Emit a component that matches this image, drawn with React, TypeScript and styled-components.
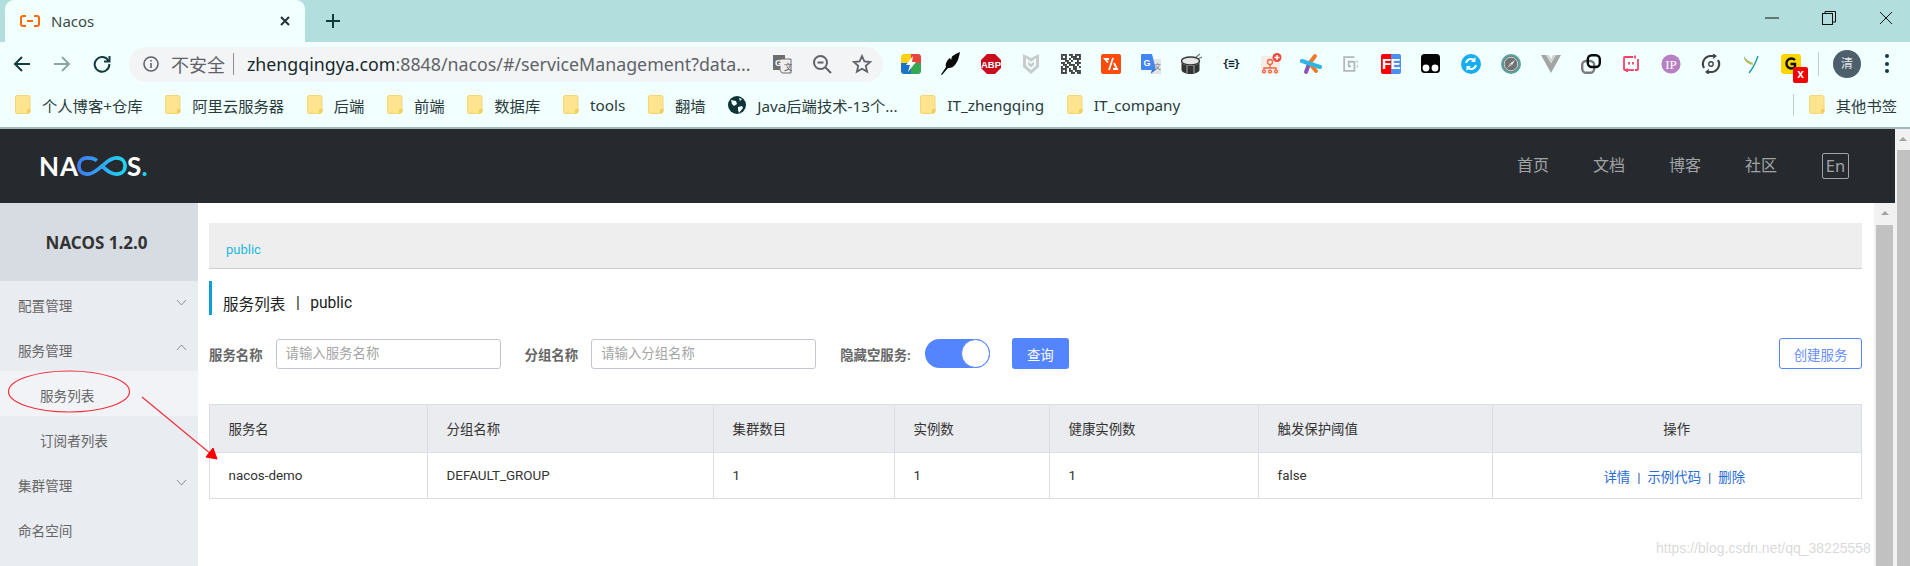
import React from "react";
import styled, { createGlobalStyle } from "styled-components";

const SANS = '"Noto Sans", "Noto Sans CJK SC", sans-serif';
const PAGE_SANS = 'Roboto, "Noto Sans CJK SC", sans-serif';

const GlobalStyle = createGlobalStyle`
  html, body { margin: 0; padding: 0; background: #fff; overflow: hidden; }
  body { font-family: ${SANS}; }
  * { box-sizing: border-box; }
`;

export default function App() {
  return (
    <Page>
      <GlobalStyle />
      <TabStrip>
        <Tab>
          <svg width="20" height="12" viewBox="0 0 20 12">
            <path d="M6 1H3Q1 1 1 3V9Q1 11 3 11H6M14 1H17Q19 1 19 3V9Q19 11 17 11H14M7 6H13" fill="none" stroke="#ff6a00" strokeWidth="2" />
          </svg>
          <TabTitle>Nacos</TabTitle>
          <svg width="12" height="12" viewBox="0 0 12 12">
            <path d="M2 2L10 10M10 2L2 10" stroke="#263238" strokeWidth="2" />
          </svg>
        </Tab>
        <NewTab>
          <svg width="16" height="16" viewBox="0 0 16 16">
            <path d="M8 1V15M1 8H15" stroke="#0f3b3d" strokeWidth="2" />
          </svg>
        </NewTab>
        <WindowButtons>
          <svg width="14" height="14" viewBox="0 0 14 14"><path d="M0 7H14" stroke="#111" /></svg>
          <svg width="14" height="14" viewBox="0 0 14 14" fill="none" stroke="#111">
            <rect x="0.5" y="2.5" width="10" height="11" /><path d="M3 2.5V.5H13.5V11H10.5" />
          </svg>
          <svg width="14" height="14" viewBox="0 0 14 14"><path d="M1 1L13 13M13 1L1 13" stroke="#111" /></svg>
        </WindowButtons>
      </TabStrip>

      <Toolbar>
        <ToolButton>
          <svg width="18" height="18" viewBox="0 0 18 18" fill="none" stroke="#143c3e" strokeWidth="2">
            <path d="M17 9H2M9 2L2 9L9 16" />
          </svg>
        </ToolButton>
        <ToolButton>
          <svg width="18" height="18" viewBox="0 0 18 18" fill="none" stroke="#8fa3a3" strokeWidth="2">
            <path d="M1 9H16M9 2L16 9L9 16" />
          </svg>
        </ToolButton>
        <ToolButton>
          <svg width="18" height="18" viewBox="0 0 18 18" fill="none" stroke="#143c3e" strokeWidth="2">
            <path d="M15.5 6A7.3 7.3 0 1 0 16.3 9" /><path d="M16.5 1V6.5H11" />
          </svg>
        </ToolButton>
        <UrlPill>
          <svg width="16" height="16" viewBox="0 0 16 16" fill="none" stroke="#5f6368" strokeWidth="1.6">
            <circle cx="8" cy="8" r="7" /><path d="M8 7V12M8 4V5.6" />
          </svg>
          <NotSecure>不安全</NotSecure>
          <UrlDivider />
          <UrlText><b>zhengqingya.com</b>:8848/nacos/#/serviceManagement?data...</UrlText>
          <UrlActions>
            <svg width="20" height="20" viewBox="0 0 20 20">
              <rect x="1" y="1" width="12" height="15" fill="#6e6e6e" />
              <path d="M8 5H19V19H10L8 16Z" fill="#eee" stroke="#6e6e6e" />
              <text x="3" y="12" fontSize="9" fontWeight="700" fill="#fff" fontFamily="Liberation Sans, sans-serif">G</text>
              <text x="12" y="16" fontSize="9" fill="#555" fontFamily="Liberation Sans, sans-serif">文</text>
            </svg>
            <svg width="20" height="20" viewBox="0 0 20 20" fill="none" stroke="#5f6368" strokeWidth="2">
              <circle cx="8.5" cy="8.5" r="6.5" /><path d="M13.5 13.5L19 19M5.5 8.5H11.5" />
            </svg>
            <svg width="20" height="20" viewBox="0 0 20 20" fill="none" stroke="#5f6368" strokeWidth="1.8">
              <path d="M10 2L12.4 7.4L18.2 8L13.8 11.9L15.1 17.6L10 14.7L4.9 17.6L6.2 11.9L1.8 8L7.6 7.4Z" />
            </svg>
          </UrlActions>
        </UrlPill>
        <Extensions>
          {extensions.map((icon, i) => (
            <ExtCell key={i}>{icon}</ExtCell>
          ))}
        </Extensions>
        <ToolDivider />
        <Avatar>清</Avatar>
        <MenuDots>
          <i /><i /><i />
        </MenuDots>
      </Toolbar>

      <Bookmarks>
        {bookmarks.map((b) => (
          <Bookmark key={b}>
            {b.startsWith("Java") ? <GlobeIcon /> : <FolderIcon />}
            <span>{b}</span>
          </Bookmark>
        ))}
        <OtherBookmarks>
          <FolderIcon />
          <span>其他书签</span>
        </OtherBookmarks>
      </Bookmarks>

      <Viewport>
        <Main>
          <NavBar>
            <Logo>
              <span>N</span>
              <span>A</span>
              <svg width="50" height="20" viewBox="0 0 50 20" fill="none">
                <defs>
                  <linearGradient id="inf" x1="0" x2="1" y1="0" y2="0">
                    <stop offset="0" stopColor="#3f7cf6" />
                    <stop offset="1" stopColor="#1fd6f2" />
                  </linearGradient>
                </defs>
                <path
                  d="M20 4.5C17 2.5 14 1.9 10.5 1.9C5 1.9 1.9 5.5 1.9 10C1.9 14.5 5 18.1 10.5 18.1C16.5 18.1 20 14 25 10C30 6 33.5 1.9 39.5 1.9C45 1.9 48.1 5.5 48.1 10C48.1 14.5 45 18.1 39.5 18.1C33.5 18.1 29.5 14 25 10"
                  stroke="url(#inf)"
                  strokeWidth="3.7"
                />
              </svg>
              <span>S</span>
              <LogoDot>.</LogoDot>
            </Logo>
            <NavLinks>
              <NavLink>首页</NavLink>
              <NavLink>文档</NavLink>
              <NavLink>博客</NavLink>
              <NavLink>社区</NavLink>
              <LangButton>En</LangButton>
            </NavLinks>
          </NavBar>
          <Body>
            <Sidebar>
              <SideHead>NACOS 1.2.0</SideHead>
              <MenuItem>配置管理<Chevron /></MenuItem>
              <MenuItem>服务管理<Chevron $up /></MenuItem>
              <MenuItem $sub $active>服务列表</MenuItem>
              <MenuItem $sub>订阅者列表</MenuItem>
              <MenuItem>集群管理<Chevron /></MenuItem>
              <MenuItem>命名空间</MenuItem>
            </Sidebar>
            <Content>
              <PublicBar>public</PublicBar>
              <PageTitle>
                服务列表<TitleSep>|</TitleSep>public
              </PageTitle>
              <FilterRow>
                <FieldLabel>服务名称</FieldLabel>
                <TextInput placeholder="请输入服务名称" />
                <FieldLabel $left={24}>分组名称</FieldLabel>
                <TextInput placeholder="请输入分组名称" />
                <FieldLabel $left={24}>隐藏空服务:</FieldLabel>
                <Toggle><Knob /></Toggle>
                <PrimaryButton>查询</PrimaryButton>
                <OutlineButton>创建服务</OutlineButton>
              </FilterRow>
              <Table>
                <colgroup>
                  {colWidths.map((w) => (
                    <Col key={w} $w={w} />
                  ))}
                </colgroup>
                <thead>
                  <tr>
                    <Th>服务名</Th>
                    <Th>分组名称</Th>
                    <Th>集群数目</Th>
                    <Th>实例数</Th>
                    <Th>健康实例数</Th>
                    <Th>触发保护阈值</Th>
                    <Th $center>操作</Th>
                  </tr>
                </thead>
                <tbody>
                  <tr>
                    <Td>nacos-demo</Td>
                    <Td>DEFAULT_GROUP</Td>
                    <Td>1</Td>
                    <Td>1</Td>
                    <Td>1</Td>
                    <Td>false</Td>
                    <ActionCell>
                      <ActionLink>详情</ActionLink>
                      <ActionSep>|</ActionSep>
                      <ActionLink>示例代码</ActionLink>
                      <ActionSep>|</ActionSep>
                      <ActionLink>删除</ActionLink>
                    </ActionCell>
                  </tr>
                </tbody>
              </Table>
            </Content>
            <InnerScroll>
              <ScrollArrow />
              <ScrollThumb />
            </InnerScroll>
          </Body>
        </Main>
        <OuterScroll>
          <ScrollArrow />
          <ScrollThumb />
        </OuterScroll>
      </Viewport>

      {/* 截图上的红色标注 */}
      <Annotation width="1910" height="566" viewBox="0 0 1910 566" fill="none">
        <ellipse cx="69" cy="391.5" rx="60.5" ry="20.5" stroke="#f0303a" strokeWidth="1.2" />
        <path d="M142 397L211 454" stroke="#f0303a" strokeWidth="1.2" />
        <path d="M217 459L206 457L213 448Z" fill="#f00" stroke="#f00" />
      </Annotation>
      <Watermark>https://blog.csdn.net/qq_38225558</Watermark>
    </Page>
  );
}

const bookmarks = [
  "个人博客+仓库",
  "阿里云服务器",
  "后端",
  "前端",
  "数据库",
  "tools",
  "翻墙",
  "Java后端技术-13个...",
  "IT_zhengqing",
  "IT_company",
];

const colWidths = [218, 286, 181, 155, 209, 234, 369];

function FolderIcon() {
  return (
    <svg width="16" height="19" viewBox="0 0 16 19">
      <path d="M2 .5H13Q15 .5 15 2.5V16.5Q15 18.5 13 18.5H2Q.5 18.5 .5 17V2Q.5 .5 2 .5Z" fill="#ffe48f" stroke="#f3d676" />
      <path d="M12 18V15Q12 14 13.5 14H15.5V16Q15.5 18 13 18Z" fill="#f3cd5c" />
    </svg>
  );
}

function GlobeIcon() {
  return (
    <svg width="18" height="18" viewBox="0 0 18 18">
      <circle cx="9" cy="9" r="9" fill="#0f3336" />
      <path d="M3 4L8 5L9 8L6 10L4 8ZM10 11L14 10L15 12L11 17L10 14ZM11 2L14 3L12 5Z" fill="#f1ffff" />
    </svg>
  );
}

function Chevron({ $up }: { $up?: boolean }) {
  return (
    <ChevronSvg width="11" height="7" viewBox="0 0 11 7" fill="none" stroke="#8d9099">
      <path d={$up ? "M1 6L5.5 1L10 6" : "M1 1L5.5 6L10 1"} />
    </ChevronSvg>
  );
}

const Page = styled.div`
  position: relative;
  width: 1910px;
  height: 566px;
  overflow: hidden;
  display: flex;
  flex-direction: column;
  color: #263238;
  font-family: ${SANS};
`;

const TabStrip = styled.div`
  height: 42px;
  background: #b2dfdd;
  display: flex;
  padding-left: 5px;
`;

const Tab = styled.div`
  position: relative;
  width: 300px;
  background: #f1ffff;
  border-radius: 9px 9px 0 0;
  display: flex;
  align-items: center;
  padding: 0 14px 0 15px;
`;

const TabTitle = styled.span`
  flex: 1;
  margin-left: 11px;
  font-size: 15px;
  color: #3c4a4a;
`;

const NewTab = styled.div`
  width: 56px;
  display: flex;
  align-items: center;
  justify-content: center;
`;

const WindowButtons = styled.div`
  margin-left: auto;
  width: 128px;
  margin-right: 17px;
  display: flex;
  align-items: center;
  justify-content: space-between;
  padding-bottom: 6px;
`;

const Toolbar = styled.div`
  height: 43px;
  background: #f1ffff;
  display: flex;
  align-items: center;
  padding-left: 2px;
`;

const ToolButton = styled.div`
  width: 40px;
  display: flex;
  justify-content: center;
`;

const UrlPill = styled.div`
  width: 754px;
  height: 35px;
  margin-left: 7px;
  margin-top: 1px;
  border-radius: 18px;
  background: #f3f4f6;
  display: flex;
  align-items: center;
  padding-left: 14px;
`;

const NotSecure = styled.span`
  margin-left: 12px;
  font-size: 18px;
  color: #5f6368;
`;

const UrlDivider = styled.i`
  width: 1px;
  height: 22px;
  margin: 0 13px 0 8px;
  background: #8a8f93;
`;

const UrlText = styled.span`
  font-size: 17.8px;
  color: #5f6368;
  white-space: nowrap;
  width: 506px;
  b {
    font-weight: 400;
    color: #16292b;
  }
`;

const UrlActions = styled.div`
  display: flex;
  gap: 20px;
  margin-left: 19px;
`;

const Extensions = styled.div`
  display: flex;
  margin-left: 8px;
`;

const ExtCell = styled.div`
  width: 40px;
  height: 26px;
  display: flex;
  align-items: center;
  justify-content: center;
`;

const BraceIcon = styled.span`
  font-family: "DejaVu Sans Mono", monospace;
  font-size: 11px;
  font-weight: 700;
  color: #123;
  letter-spacing: -1px;
`;

const FeIcon = styled.span`
  width: 20px;
  height: 20px;
  border-radius: 2px;
  background: linear-gradient(90deg, #f00 0 50%, #4a90f0 50% 100%);
  color: #fff;
  font-family: "Liberation Sans", sans-serif;
  font-weight: 700;
  font-size: 15px;
  line-height: 20px;
  text-align: center;
  letter-spacing: -0.5px;
`;

const GrammarIcon = styled.div`
  position: relative;
  width: 20px;
  height: 20px;
  border-radius: 3px;
  background: #fdd600;
`;

const GrammarBadge = styled.span`
  position: absolute;
  right: -7px;
  bottom: -9px;
  width: 15px;
  height: 16px;
  background: #f40000;
  border-radius: 2px;
  color: #fff;
  font-family: "Liberation Sans", sans-serif;
  font-size: 12px;
  font-weight: 700;
  line-height: 15px;
  text-align: center;
`;

const ToolDivider = styled.i`
  width: 1px;
  height: 24px;
  margin-left: 7px;
  background: #c2cccc;
`;

const Avatar = styled.div`
  width: 28px;
  height: 28px;
  margin-left: 14px;
  border-radius: 50%;
  background: #4c5f6b;
  color: #e4e9ec;
  font-size: 12px;
  line-height: 28px;
  text-align: center;
`;

const MenuDots = styled.div`
  margin-left: 24px;
  display: flex;
  flex-direction: column;
  gap: 3.5px;
  i {
    width: 4px;
    height: 4px;
    border-radius: 50%;
    background: #143c3e;
  }
`;

const Bookmarks = styled.div`
  height: 44px;
  background: #f1ffff;
  border-bottom: 2px solid #a3b9b9;
  display: flex;
  align-items: center;
  gap: 22.7px;
  padding: 0 13px 3px 15px;
`;

const Bookmark = styled.div`
  display: flex;
  align-items: center;
  gap: 11px;
  font-size: 15.3px;
  color: #2b3b3c;
  white-space: nowrap;
`;

const OtherBookmarks = styled(Bookmark)`
  margin-left: auto;
  padding-left: 15px;
  border-left: 1px solid #c2cccc;
  height: 22px;
`;

const Viewport = styled.div`
  flex: 1;
  min-height: 0;
  display: flex;
`;

const Main = styled.div`
  flex: 1;
  display: flex;
  flex-direction: column;
`;

const NavBar = styled.div`
  height: 74px;
  background: #262a2e;
  display: flex;
  align-items: center;
  justify-content: space-between;
  padding: 0 46px 0 39px;
`;

const Logo = styled.div`
  display: flex;
  align-items: center;
  color: #fff;
  font-family: "Lato", sans-serif;
  font-size: 26px;
  font-weight: 700;
  line-height: 1;
  span:nth-child(2) {
    margin: 0 -1px 0 1px;
  }
`;

const LogoDot = styled.span`
  color: #1fd6f2;
`;

const NavLinks = styled.div`
  display: flex;
  align-items: center;
  gap: 44px;
`;

const NavLink = styled.span`
  font-size: 16px;
  line-height: 22px;
  margin-bottom: 2px;
  color: #a0a3a5;
`;

const LangButton = styled.span`
  width: 27px;
  height: 26px;
  margin-left: 1px;
  border: 1px solid #a0a3a5;
  border-radius: 2px;
  color: #a0a3a5;
  font-size: 16.5px;
  line-height: 24px;
  text-align: center;
`;

const Body = styled.div`
  flex: 1;
  min-height: 0;
  display: flex;
`;

const Sidebar = styled.div`
  width: 198px;
  background: #e9ecf1;
`;

const SideHead = styled.div`
  height: 78px;
  padding-right: 5px;
  background: #d7dce3;
  display: flex;
  align-items: center;
  justify-content: center;
  font-size: 17px;
  font-weight: 700;
  color: #333;
`;

const MenuItem = styled.div<{ $sub?: boolean; $active?: boolean }>`
  height: 45px;
  display: flex;
  align-items: center;
  justify-content: space-between;
  padding: 3px 11px 0 ${(p) => (p.$sub ? 40 : 18)}px;
  background: ${(p) => (p.$active ? "#f1f3f7" : "transparent")};
  font-size: 13.6px;
  color: #666;
`;

const ChevronSvg = styled.svg`
  margin-top: -5px;
`;

const Content = styled.div`
  flex: 1;
  min-width: 0;
  padding: 20px 12px 0 11px;
  background: #fff;
  font-family: ${PAGE_SANS};
`;

const PublicBar = styled.div`
  height: 46px;
  background: #eeeeee;
  border-bottom: 1px solid #ccc;
  padding: 18px 0 0 17px;
  font-size: 13px;
  line-height: 18px;
  color: #1fb8e0;
`;

const PageTitle = styled.div`
  height: 34px;
  margin-top: 12px;
  border-left: 3px solid #0f9ed4;
  padding: 9px 0 0 11px;
  display: flex;
  align-items: center;
  font-size: 15.6px;
  color: #222;
`;

const TitleSep = styled.span`
  margin: 0 10.5px;
`;

const FilterRow = styled.div`
  height: 31px;
  margin-top: 23px;
  display: flex;
  align-items: center;
`;

const FieldLabel = styled.label<{ $left?: number }>`
  margin-left: ${(p) => p.$left ?? 0}px;
  margin-right: 13px;
  font-size: 13.4px;
  font-weight: 700;
  color: #666;
  white-space: nowrap;
`;

const TextInput = styled.input`
  width: 225px;
  height: 30px;
  border: 1px solid #c4c6cf;
  border-radius: 3px;
  padding: 0 9px;
  font-family: ${PAGE_SANS};
  font-size: 13.4px;
  outline: none;
  &::placeholder {
    color: #a5a5a5;
  }
`;

const Toggle = styled.div`
  width: 65px;
  height: 29px;
  margin-left: 1px;
  border-radius: 15px;
  background: #5584ff;
  display: flex;
  justify-content: flex-end;
`;

const Knob = styled.div`
  width: 29px;
  height: 29px;
  border-radius: 50%;
  background: #fff;
  border: 1px solid #5584ff;
`;

const PrimaryButton = styled.button`
  width: 57px;
  height: 31px;
  margin-left: 22px;
  border: 0;
  border-radius: 3px;
  background: #5584ff;
  color: #fff;
  font-family: ${PAGE_SANS};
  font-size: 13.4px;
`;

const OutlineButton = styled.button`
  width: 83px;
  height: 31px;
  margin-left: auto;
  border: 1px solid #5584ff;
  border-radius: 3px;
  background: #fff;
  color: #6a90f5;
  font-family: ${PAGE_SANS};
  font-size: 13.4px;
`;

const Table = styled.table`
  width: 1652px;
  margin-top: 35px;
  border-collapse: collapse;
  table-layout: fixed;
  font-size: 13.4px;
  color: #333;
`;

const Col = styled.col<{ $w: number }>`
  width: ${(p) => p.$w}px;
`;

const Th = styled.th<{ $center?: boolean }>`
  height: 48px;
  padding: 0 19px 1px 18.5px;
  background: #ebecf0;
  border: 1px solid #dcdee3;
  font-weight: 400;
  text-align: ${(p) => (p.$center ? "center" : "left")};
`;

const Td = styled.td`
  height: 46px;
  padding: 0 19px 0 18.5px;
  border: 1px solid #dcdee3;
  text-align: left;
`;

const ActionCell = styled(Td)`
  padding-right: 24px;
  text-align: center;
`;

const ActionLink = styled.a`
  color: #2a6cd6;
`;

const ActionSep = styled.span`
  margin: 0 7px;
  color: #2a5a9c;
`;

const InnerScroll = styled.div`
  width: 21px;
  background: #f1f1f1;
  padding: 22px 2px 0;
  position: relative;
`;

const OuterScroll = styled.div`
  width: 16px;
  background: #f1f1f1;
  padding: 21px 0 0 2px;
  position: relative;
`;

const ScrollArrow = styled.i`
  position: absolute;
  top: 8px;
  left: 50%;
  margin-left: -4px;
  border: 4px solid transparent;
  border-top: 0;
  border-bottom: 4px solid #a3a3a3;
`;

const ScrollThumb = styled.div`
  height: 100%;
  background: #c1c1c1;
`;

const Annotation = styled.svg`
  position: absolute;
  left: 0;
  top: 0;
  pointer-events: none;
`;

const Watermark = styled.span`
  position: absolute;
  left: 1656px;
  top: 535px;
  font-family: "Liberation Sans", sans-serif;
  font-size: 14px;
  line-height: 26px;
  color: rgba(205, 205, 205, 0.75);
  white-space: nowrap;
`;

// 二维码图标的点阵
const qrRows = [
  "1110110111",
  "1010011101",
  "1110101111",
  "0011010010",
  "1101100111",
  "0110111010",
  "1011001101",
  "1110101100",
  "1010110111",
  "1110011011",
];

const extensions: React.ReactNode[] = [
  <svg key="store" width="20" height="20" viewBox="0 0 20 20">
    <path d="M3 0H10V9H0V3Q0 0 3 0Z" fill="#fcd116" />
    <path d="M10 0H17Q20 0 20 3V9H10Z" fill="#e8453c" />
    <path d="M0 9H10V20H3Q0 20 0 17Z" fill="#1a73c8" />
    <path d="M10 9H20V17Q20 20 17 20H10Z" fill="#34a853" />
    <path d="M12 2L5 11H9L7 18L15 8H11Z" fill="#fff" />
  </svg>,
  <svg key="feather" width="20" height="24" viewBox="0 0 20 24">
    <path d="M19 0C18 5 17 10 13 14C11 16 8 16 7 16L1 23L0 22.5L5 15C4 12 6 8 9 6L10 8L11 4.5C13 3 16 1 19 0Z" fill="#0a0a0a" />
  </svg>,
  <svg key="abp" width="20" height="20" viewBox="0 0 20 20">
    <path d="M6 0H14L20 6V14L14 20H6L0 14V6Z" fill="#c70d1e" />
    <text x="10" y="13.5" textAnchor="middle" fontSize="9.5" fontWeight="700" fill="#fff" fontFamily="Liberation Sans, sans-serif">ABP</text>
  </svg>,
  <svg key="shield" width="16" height="20" viewBox="0 0 16 20">
    <path d="M0 0L8 4L16 0V13L8 20L0 13Z" fill="#c9cccc" />
    <path d="M3 4L8 8L13 4V11.5L8 16L3 11.5Z" fill="#f1ffff" />
    <path d="M5 7.5L8 10L11 7.5V11L8 13.5L5 11Z" fill="#c9cccc" />
  </svg>,
  <svg key="qr" width="20" height="20" viewBox="0 0 20 20">
    {qrRows.map((row, y) =>
      row.split("").map((c, x) =>
        c === "1" ? <rect key={`${x}-${y}`} x={x * 2} y={y * 2} width="1.9" height="1.9" fill="#3a3a3a" /> : null
      )
    )}
  </svg>,
  <svg key="code" width="20" height="20" viewBox="0 0 20 20">
    <rect width="20" height="20" rx="2" fill="#fc4c0c" />
    <path d="M8 5H4L7 8.5M12 4L8 16M13 9L16 15H12" fill="none" stroke="#fff" strokeWidth="1.8" />
  </svg>,
  <svg key="gt" width="20" height="20" viewBox="0 0 20 20">
    <path d="M8 5H20V20H11Z" fill="#e4e4e4" />
    <path d="M1 0H11L15 16H1Q0 16 0 15V1Q0 0 1 0Z" fill="#4285f4" />
    <path d="M11 16L9.5 20L14.5 16Z" fill="#3367c8" />
    <text x="2.5" y="11.5" fontSize="9" fontWeight="700" fill="#fff" fontFamily="Liberation Sans, sans-serif">G</text>
    <text x="13" y="15" fontSize="7" fill="#777" fontFamily="Noto Sans CJK SC, sans-serif">文</text>
  </svg>,
  <svg key="drum" width="21" height="21" viewBox="0 0 21 21">
    <path d="M14 5L19 1M16 6L21 4" stroke="#777" strokeWidth="1.2" />
    <ellipse cx="9.5" cy="8" rx="9" ry="4" fill="#e6e6e6" stroke="#333" strokeWidth="1.4" />
    <path d="M.5 9V17C.5 19 5 21 9.5 21C14 21 18.5 19 18.5 17V9C18 11 14 13 9.5 13C5 13 1 11 .5 9Z" fill="#333" />
    <path d="M6 13V20M13 13V20" stroke="#aaa" />
  </svg>,
  <BraceIcon key="brace">{"{≡}"}</BraceIcon>,
  <svg key="org" width="21" height="21" viewBox="0 0 21 21">
    <rect x="0" y="3" width="19" height="18" rx="2" fill="#f5ece8" />
    <g fill="none" stroke="#f2643c" strokeWidth="1.3">
      <circle cx="9" cy="9" r="2.5" />
      <path d="M9 11.5V15M3 17V15H15V17" />
      <circle cx="3" cy="18.5" r="1.4" /><circle cx="9" cy="18.5" r="1.4" /><circle cx="15" cy="18.5" r="1.4" />
    </g>
    <circle cx="16" cy="4.5" r="4.5" fill="#ea4a3c" />
    <path d="M16 2V7M13.5 4.5H18.5" stroke="#fff" strokeWidth="1.4" />
  </svg>,
  <svg key="star" width="22" height="22" viewBox="0 0 22 22" fill="none" strokeWidth="4" strokeLinecap="round">
    <path d="M15 3L9 11" stroke="#f07a28" />
    <path d="M9 11L6 19" stroke="#8e54b4" />
    <path d="M11 12L16 18" stroke="#f07a28" />
    <path d="M2 8L20 14" stroke="#2fb6e8" />
  </svg>,
  <svg key="spiral" width="16" height="16" viewBox="0 0 14 14" fill="none" stroke="#b4b8b8" strokeWidth="1.6">
    <path d="M10 1H1V13H10V5H5V9H7" /><path d="M12.5 4V6M12.5 8V10" strokeWidth="1" />
  </svg>,
  <FeIcon key="fe">FE</FeIcon>,
  <svg key="tm" width="20" height="20" viewBox="0 0 20 20">
    <rect width="19" height="19" rx="3.5" fill="#050505" />
    <circle cx="5" cy="14" r="3.4" fill="#fff" />
    <circle cx="14" cy="14" r="3.4" fill="#fff" />
  </svg>,
  <svg key="sync" width="20" height="20" viewBox="0 0 20 20">
    <circle cx="10" cy="10" r="10" fill="#17aef0" />
    <path d="M5 9A5 5 0 0 1 13 6M15 11A5 5 0 0 1 7 14" fill="none" stroke="#fff" strokeWidth="2" />
    <path d="M14.5 3V8H10ZM5.5 17V12H10Z" fill="#fff" />
  </svg>,
  <svg key="compass" width="20" height="20" viewBox="0 0 20 20">
    <circle cx="10" cy="10" r="9" fill="#6e7474" stroke="#57a5a3" strokeWidth="2" />
    <circle cx="10" cy="10" r="6.8" fill="none" stroke="#e8eeee" strokeWidth=".8" />
    <path d="M14 6L11 11L9 9.5Z" fill="#eee" />
    <path d="M6 14L9 9.5L11 11Z" fill="#bbb" />
  </svg>,
  <svg key="vue" width="20" height="18" viewBox="0 0 20 18">
    <path d="M0 0H5L10 8L15 0H20L10 18Z" fill="#a3a5a5" />
    <path d="M5 0H8L10 4L12 0H15L10 8Z" fill="#d0d2d2" />
  </svg>,
  <svg key="link" width="20" height="20" viewBox="0 0 20 20" fill="none" strokeWidth="2.4">
    <rect x="1.2" y="7" width="12" height="11.8" rx="4" stroke="#7b7d7d" />
    <rect x="6.8" y="1.2" width="12" height="11.8" rx="4" stroke="#0a0a0a" />
  </svg>,
  <svg key="msg" width="16" height="18" viewBox="0 0 16 18" fill="none" stroke="#ff3f66" strokeWidth="1.8">
    <path d="M10 2H2Q1 2 1 3V14Q1 15 2 15H4M12 15H14Q15 15 15 14V4M12 .5V3.5M4 13.5V17" />
    <path d="M4 15H11" />
    <path d="M6 7V9.5M10 7V9.5" />
  </svg>,
  <svg key="ip" width="20" height="20" viewBox="0 0 20 20">
    <circle cx="10" cy="10" r="9.6" fill="#b77fc4" />
    <text x="10" y="14.5" textAnchor="middle" fontSize="13" fill="#fff" fontFamily="Liberation Serif, serif">IP</text>
  </svg>,
  <svg key="rotate" width="20" height="20" viewBox="0 0 20 20" fill="none" stroke="#444" strokeWidth="2.2">
    <path d="M3 14A8 8 0 0 1 9 2L14 2" /><path d="M17 6A8 8 0 0 1 11 18L6 18" />
    <circle cx="10" cy="10" r="2.2" strokeWidth="1.4" />
    <path d="M12 0L15 2L12 4.5M8 15.5L5 18L8 20" strokeWidth="1.2" />
  </svg>,
  <svg key="bird" width="16" height="20" viewBox="0 0 16 20" fill="none">
    <path d="M15 2C13 8 10 14 6 19" stroke="#1f9ba0" strokeWidth="1.4" />
    <path d="M1 2C3 6 6 8 10 9C7 9 4 8 2 6Z" fill="#2a8a9c" />
    <path d="M2 5C4 8 7 10 10 10" stroke="#c9b83c" strokeWidth="1.4" />
  </svg>,
  <GrammarIcon key="g">
    <svg width="20" height="20" viewBox="0 0 20 20" fill="none">
      <path d="M14 6A5 5 0 1 0 14 13V10H9.5" stroke="#111" strokeWidth="2.4" />
    </svg>
    <GrammarBadge>x</GrammarBadge>
  </GrammarIcon>,
];
